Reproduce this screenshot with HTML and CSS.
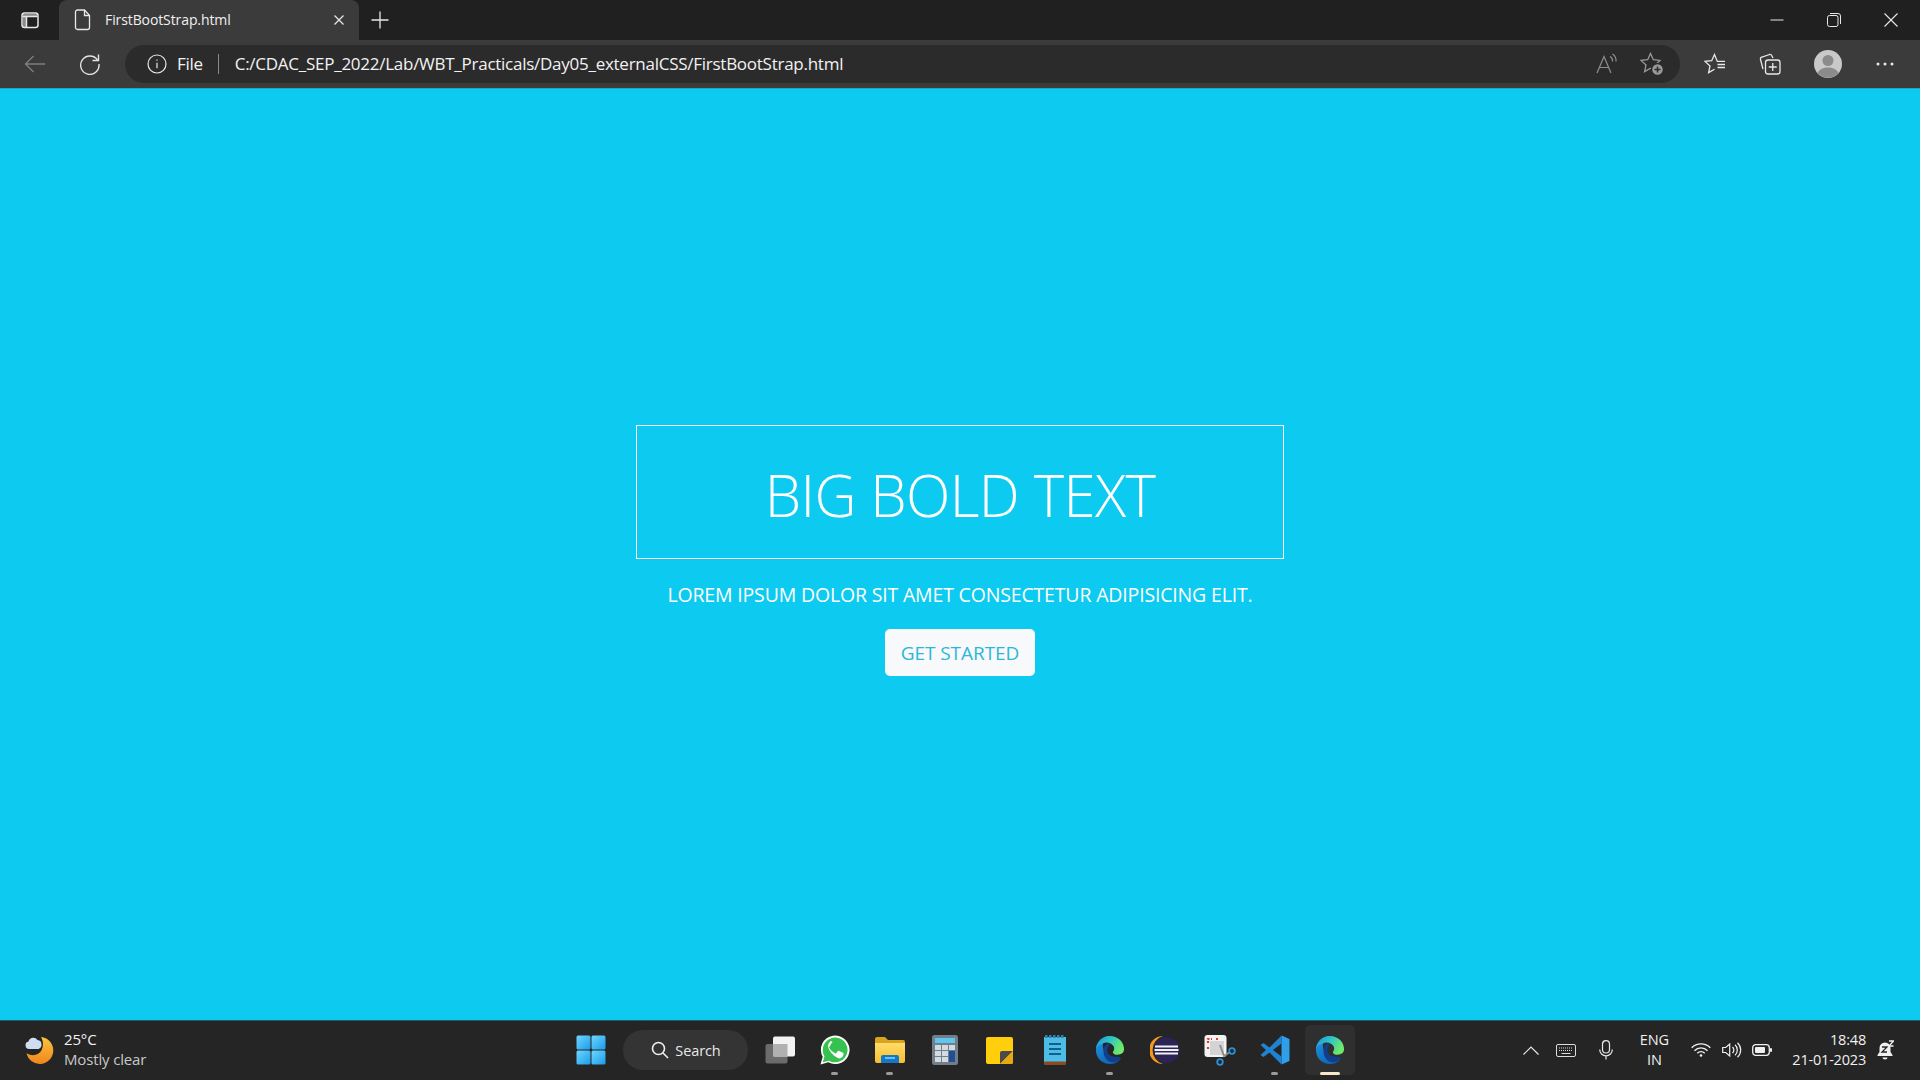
FILE: index.html
```html
<!DOCTYPE html>
<html lang="en">

<head>
    <meta charset="UTF-8">
    <meta name="viewport" content="width=device-width, initial-scale=1.0">
    <title>FirstBootStrap.html</title>
    <link rel="stylesheet" href="styles.css">
</head>

<body>
    <svg class="defs" width="0" height="0">
        <defs>
            <linearGradient id="edgeTop" x1="0" y1="0" x2="1" y2="0.4">
                <stop offset="0" stop-color="#1f8fe0" />
                <stop offset="0.5" stop-color="#2cc4c8" />
                <stop offset="1" stop-color="#6ee96a" />
            </linearGradient>
            <linearGradient id="edgeLow" x1="0" y1="0" x2="0.6" y2="1">
                <stop offset="0" stop-color="#1f9be6" />
                <stop offset="1" stop-color="#0f63b4" />
            </linearGradient>
            <linearGradient id="moon" x1="0" y1="0" x2="0" y2="1">
                <stop offset="0" stop-color="#fbc53a" />
                <stop offset="1" stop-color="#f0851e" />
            </linearGradient>
            <linearGradient id="winBlue" x1="0" y1="0" x2="1" y2="1">
                <stop offset="0" stop-color="#6fd6fb" />
                <stop offset="1" stop-color="#1a9cec" />
            </linearGradient>
            <linearGradient id="folder" x1="0" y1="0" x2="0" y2="1">
                <stop offset="0" stop-color="#ffdc6a" />
                <stop offset="1" stop-color="#f6bd2e" />
            </linearGradient>
            <symbol id="edge" viewBox="0 0 32 32">
                <path fill="url(#edgeLow)" d="M1 16C1 7 8 1 16 1c-6 3-9 8-7 14 1 7 8 12 18 11-3 3-7 5-11 5C8 31 1 25 1 16z" />
                <path fill="#123f8c" d="M9 17c0-5 4-9 9-8-3 1-5 4-5 7 0 5 5 8 12 7l3 2c-3 3-6 4-9 4C13 29 9 23 9 17z" />
                <path fill="url(#edgeTop)" d="M1 15C2 7 8 1 16 1c9 0 15 7 15 14 0 4-3 6-7 6-3 0-5-1-5-3 2-2 2-5 0-7-2-3-7-4-11-2-3 1-6 3-7 6z" />
            </symbol>
        </defs>
    </svg>

    <header class="tabstrip">
        <div class="strip-left">
            <svg class="ic" width="20" height="20" viewBox="0 0 20 20" fill="none" stroke="#e6e6e6" stroke-width="1.5">
                <path d="M3 4h14v2.500H3zM3 7h3v10H3z" fill="#8a8a8a" stroke="none" />
                <rect x="2" y="3" width="16" height="14.5" rx="2.5" />
                <path d="M2.500 6.500h15M6.500 6.500v11" />
            </svg>
        </div>
        <div class="tab">
            <svg class="ic" width="18" height="22" viewBox="0 0 18 22" fill="none" stroke="#e8e8e8" stroke-width="1.3">
                <path d="M3.500 1h7l5 5.500V18.500a2 2 0 0 1-2 2h-10a2 2 0 0 1-2-2V3a2 2 0 0 1 2-2z" />
                <path d="M10.500 1v5.500h5" />
            </svg>
            <span class="tab-title">FirstBootStrap.html</span>
            <svg class="ic tab-x" width="12" height="12" viewBox="0 0 12 12" stroke="#e6e6e6" stroke-width="1.300">
                <path d="M1.500 1.500l9 9M10.500 1.500l-9 9" />
            </svg>
        </div>
        <svg class="ic new-tab" width="18" height="18" viewBox="0 0 18 18" stroke="#e8e8e8" stroke-width="1.300">
            <path d="M9 0.500v17M0.500 9h17" />
        </svg>
        <div class="win-btns">
            <svg class="ic" width="14" height="14" viewBox="0 0 14 14" stroke="#e8e8e8" stroke-width="1">
                <path d="M0.500 7h13" />
            </svg>
            <svg class="ic" width="14" height="14" viewBox="0 0 14 14" fill="none" stroke="#e8e8e8" stroke-width="1">
                <rect x="0.500" y="2.500" width="10.500" height="11" rx="2" />
                <path d="M3 0.500h8a2.500 2.500 0 0 1 2.500 2.500v8" />
            </svg>
            <svg class="ic" width="14" height="14" viewBox="0 0 14 14" stroke="#e8e8e8" stroke-width="1.100">
                <path d="M0.500 0.500l13 13M13.500 0.500l-13 13" />
            </svg>
        </div>
    </header>

    <nav class="toolbar">
        <svg class="ic nav-ic" width="22" height="18" viewBox="0 0 22 18" fill="none" stroke="#7d7d7d" stroke-width="1.400">
            <path d="M21 9H1.500M9.500 1L1.500 9l8 8" />
        </svg>
        <svg class="ic nav-ic" width="22" height="22" viewBox="0 0 22 22" fill="none" stroke="#e4e4e4" stroke-width="1.400">
            <path d="M18.500 7A9.200 9.200 0 1 0 20 11" />
            <path d="M19.500 1.500V7.500H13.500" />
        </svg>
        <div class="address">
            <svg class="ic" width="20" height="20" viewBox="0 0 20 20" fill="none" stroke="#e8e8e8" stroke-width="1.200">
                <circle cx="10" cy="10" r="9" />
                <path d="M10 8.800v5.500M10 5.400v1.400" />
            </svg>
            <span class="file-label">File</span>
            <span class="addr-sep"></span>
            <span class="url">C:/CDAC_SEP_2022/Lab/WBT_Practicals/Day05_externalCSS/FirstBootStrap.html</span>
            <div class="addr-right">
                <svg class="ic" width="22" height="22" viewBox="0 0 22 22" fill="none" stroke="#8f8f8f" stroke-width="1.200">
                    <path d="M1 20L8 3.500l7 16.500M3.500 14.500h9" />
                    <path d="M14 3.500a5 5 0 0 1 2.500 5M16.500 1a8 8 0 0 1 3.500 7.500" />
                </svg>
                <svg class="ic" width="24" height="24" viewBox="0 0 24 24" fill="none" stroke="#9a9a9a" stroke-width="1.300">
                    <path d="M10.500 1.500l2.800 6.200 6.700.7-5 4.500 1.400 6.700-5.900-3.400-5.900 3.400 1.400-6.700-5-4.500 6.700-.7z" />
                    <circle cx="17.500" cy="17.500" r="6" fill="#9a9a9a" stroke="#2b2b2b" stroke-width="1.500" />
                    <path d="M17.500 14.500v6M14.500 17.500h6" stroke="#2b2b2b" stroke-width="1.500" />
                </svg>
            </div>
        </div>
        <div class="tool-right">
            <svg class="ic" width="22" height="22" viewBox="0 0 22 22" fill="none" stroke="#e8e8e8" stroke-width="1.300">
                <path d="M21 8.400h-7.700L10.500 1.500 7.700 7.700 1 8.400l5 4.500-1.400 6.700 5.900-3.400" />
                <path d="M13.500 11.500h7.500M13.500 14.500h7.500" />
            </svg>
            <svg class="ic" width="22" height="22" viewBox="0 0 22 22" fill="none" stroke="#e8e8e8" stroke-width="1.300">
                <path d="M4 16L1.500 6.500a2 2 0 0 1 1.500-2.500l7.500-2.500a2 2 0 0 1 2.500 1.500L14 5" />
                <rect x="6.500" y="7" width="14.500" height="14" rx="2.500" />
                <path d="M13.750 10v8M9.750 14h8" />
            </svg>
            <svg class="ic avatar" width="28" height="28" viewBox="0 0 28 28">
                <circle cx="14" cy="14" r="14" fill="#c9c9c9" />
                <circle cx="14" cy="10.500" r="5.500" fill="#8b8b8b" />
                <path d="M3.500 23c2-4 6-5.500 10.500-5.500s8.500 1.500 10.500 5.500A14 14 0 0 1 3.500 23z" fill="#8b8b8b" />
            </svg>
            <svg class="ic" width="18" height="4" viewBox="0 0 18 4" fill="#e8e8e8">
                <circle cx="2" cy="2" r="1.500" />
                <circle cx="9" cy="2" r="1.500" />
                <circle cx="16" cy="2" r="1.500" />
            </svg>
        </div>
    </nav>

    <main class="page">
        <div class="hero">
            <h1 class="hero-title">BIG BOLD TEXT</h1>
            <p class="hero-text">LOREM IPSUM DOLOR SIT AMET CONSECTETUR ADIPISICING ELIT.</p>
            <a class="hero-btn">GET STARTED</a>
        </div>
    </main>

    <footer class="taskbar">
        <div class="weather">
            <svg class="ic" width="30" height="30" viewBox="0 0 30 30">
                <path fill="url(#moon)" d="M17 2A13.500 13.500 0 1 1 2.500 18c3 2.500 8 3 12 .5 4.500-3 6-10.500 2.500-16.500z" />
                <path fill="#cfdcf2" d="M5 14a3.800 3.800 0 0 1-.5-7.500A5 5 0 0 1 13.500 5a4.500 4.500 0 0 1 4 4.500A4.500 4.500 0 0 1 14.500 14z" />
            </svg>
            <div class="weather-txt">
                <span class="temp">25°C</span>
                <span class="cond">Mostly clear</span>
            </div>
        </div>

        <div class="apps">
            <div class="app">
                <svg width="30" height="30" viewBox="0 0 30 30" fill="url(#winBlue)">
                    <rect x="0.500" y="0.500" width="14" height="14" rx="1.500" />
                    <rect x="15.500" y="0.500" width="14" height="14" rx="1.500" />
                    <rect x="0.500" y="15.500" width="14" height="14" rx="1.500" />
                    <rect x="15.500" y="15.500" width="14" height="14" rx="1.500" />
                </svg>
            </div>
            <div class="search">
                <svg width="18" height="18" viewBox="0 0 18 18" fill="none" stroke="#f0f0f0" stroke-width="1.600">
                    <circle cx="7.500" cy="7.500" r="6" />
                    <path d="M12 12l5 5" />
                </svg>
                <span>Search</span>
            </div>
            <div class="app">
                <svg width="30" height="28" viewBox="0 0 30 28">
                    <rect x="0.500" y="8" width="22" height="19.500" rx="2" fill="#6b6b6b" />
                    <rect x="8" y="0.500" width="22" height="20" rx="2" fill="#f2f2f2" />
                    <rect x="8" y="8" width="14.500" height="12.500" fill="#b0b0b0" />
                </svg>
            </div>
            <div class="app open">
                <svg width="30" height="30" viewBox="0 0 30 30">
                    <path fill="#fff" d="M0.500 29.500l2.200-7.800A14.300 14.300 0 1 1 8.300 27.300z" />
                    <path fill="#35c24f" d="M2.800 27.300l1.700-6A12.400 12.400 0 1 1 9 25.700z" />
                    <path fill="#fff" d="M10.800 8.200c-.4 0-1 .1-1.500.7-.5.600-1.700 1.800-1.700 4.200 0 2.500 1.800 4.900 2.100 5.200.2.300 3.500 5.500 8.700 7.100 1.200 0 3.600-.9 4.200-2.600.5-1.300.5-2.400.3-2.600-.1-.3-.5-.4-1-.6l-3.400-1.700c-.5-.2-.8-.3-1.100.2l-1.600 2c-.3.300-.6.400-1.100.1-3-1.500-4.500-3-6-5.500-.3-.5 0-.8.200-1l1.100-1.400c.2-.3.200-.6.100-.9L12 9c-.4-.8-.7-.8-1.200-.8z" transform="translate(0.500 -2)" />
                </svg>
            </div>
            <div class="app open">
                <svg width="32" height="28" viewBox="0 0 32 28">
                    <path fill="#d9a520" d="M1 3a2 2 0 0 1 2-2h8l3 3h15a2 2 0 0 1 2 2v4H1z" />
                    <path fill="url(#folder)" d="M1 7h30v18a2 2 0 0 1-2 2H3a2 2 0 0 1-2-2z" />
                    <path fill="#1478c8" d="M7 27v-6a2 2 0 0 1 2-2h14a2 2 0 0 1 2 2v6z" />
                    <rect x="11" y="21" width="10" height="2" fill="#6cc0f0" />
                </svg>
            </div>
            <div class="app">
                <svg width="26" height="30" viewBox="0 0 26 30">
                    <rect x="0" y="0" width="26" height="30" rx="2.500" fill="#727e8a" />
                    <rect x="3" y="3" width="20" height="5" fill="#5fc7ee" />
                    <g fill="#d4dbe0">
                        <rect x="3" y="10" width="6" height="5" />
                        <rect x="10" y="10" width="6" height="5" />
                        <rect x="17" y="10" width="6" height="5" />
                        <rect x="3" y="16" width="6" height="5" />
                        <rect x="10" y="16" width="6" height="5" />
                        <rect x="3" y="22" width="6" height="5" />
                        <rect x="10" y="22" width="6" height="5" />
                    </g>
                    <rect x="17" y="16" width="6" height="11" fill="#1f4f95" />
                </svg>
            </div>
            <div class="app">
                <svg width="27" height="27" viewBox="0 0 27 27">
                    <rect width="27" height="27" rx="2" fill="#ffcf0d" />
                    <path d="M14 27V16a2 2 0 0 1 2-2h11L14 27z" fill="#4a4a4a" />
                    <path d="M14 27h11a2 2 0 0 0 2-2V14z" fill="#e8a910" />
                </svg>
            </div>
            <div class="app">
                <svg width="22" height="30" viewBox="0 0 22 30">
                    <rect x="0" y="2" width="22" height="26" fill="#4dbde6" />
                    <rect x="0" y="26.500" width="22" height="3.500" rx="1" fill="#8c4a22" />
                    <path d="M1 1.500h20" stroke="#2f7fb0" stroke-width="3" stroke-dasharray="2.500 1.500" />
                    <path d="M5 9h12M5 14h12M5 19h12" stroke="#0f5f8a" stroke-width="1.800" />
                </svg>
            </div>
            <div class="app open">
                <svg width="30" height="30"><use href="#edge" /></svg>
            </div>
            <div class="app">
                <svg width="30" height="30" viewBox="0 0 30 30">
                    <path d="M13 1A14 14 0 0 0 13 29 14.600 14.600 0 0 1 13 1z" fill="#f39a1e" />
                    <circle cx="16.500" cy="15" r="13" fill="#2c2356" />
                    <path d="M5 11.500h23M4.500 15h24M5 18.500h23" stroke="#f1f1f8" stroke-width="2" />
                </svg>
            </div>
            <div class="app">
                <svg width="32" height="32" viewBox="0 0 32 32">
                    <rect x="0.500" y="1" width="22" height="22" rx="3" fill="#f3f3f3" />
                    <path d="M4 9V5h4M12 5h2M4 13v2" fill="none" stroke="#d6402e" stroke-width="2.200" stroke-dasharray="2 1.500" />
                    <rect x="6" y="7" width="14" height="14" fill="#d4d4d4" />
                    <path d="M16 11l4 11 6 -4" fill="none" stroke="#8e8e8e" stroke-width="2" />
                    <circle cx="28" cy="17" r="2.800" fill="none" stroke="#2c8fd8" stroke-width="1.800" />
                    <circle cx="16" cy="28" r="2.800" fill="none" stroke="#2c8fd8" stroke-width="1.800" />
                </svg>
            </div>
            <div class="app open">
                <svg width="30" height="30" viewBox="0 0 30 30">
                    <path fill="#2f9fe8" d="M21.500 0.500L29.500 4v22l-8 3.500z" />
                    <path fill="#1f83d2" d="M21.500 0.500L9.500 12.500 3.500 8 0.500 10l5.500 5-5.500 5 3 2 6-4.500 12 12V21.500L13 15l8.500-6.500z" />
                </svg>
            </div>
            <div class="app active">
                <svg width="30" height="30"><use href="#edge" /></svg>
            </div>
        </div>

        <div class="tray">
            <svg width="16" height="9" viewBox="0 0 16 9" fill="none" stroke="#e8e8e8" stroke-width="1.200">
                <path d="M0.500 8.500L8 1l7.500 7.500" />
            </svg>
            <svg class="kbd" width="20" height="13" viewBox="0 0 20 13" fill="none" stroke="#dcdcdc" stroke-width="1">
                <rect x="0.500" y="0.500" width="19" height="12" rx="1.500" />
                <path d="M3 4h14M3 6.500h14" stroke-dasharray="1 1" />
                <path d="M5.500 9.500h9" />
            </svg>
            <svg class="mic" width="14" height="20" viewBox="0 0 14 20" fill="none" stroke="#e8e8e8" stroke-width="1.200">
                <rect x="3.500" y="0.700" width="7" height="12.300" rx="3.500" />
                <path d="M0.700 9.500a6.300 6.300 0 0 0 12.600 0M7 16v3.500" />
            </svg>
            <div class="lang"><span>ENG</span><span>IN</span></div>
            <svg class="wifi" width="20" height="14" viewBox="0 0 20 14" fill="none" stroke="#f0f0f0" stroke-width="1.400">
                <path d="M0.700 4.800a13 13 0 0 1 18.600 0M3.500 7.700a9 9 0 0 1 13 0M6.300 10.300a5 5 0 0 1 7.400 0" />
                <circle cx="10" cy="12.500" r="1.300" fill="#f0f0f0" stroke="none" />
            </svg>
            <svg class="vol" width="20" height="16" viewBox="0 0 20 16" fill="none" stroke="#f0f0f0" stroke-width="1.200">
                <path d="M0.700 5.500v5h3l4 3.500V2l-4 3.500z" />
                <path d="M10.500 5a4 4 0 0 1 0 6M13 2.800a7 7 0 0 1 0 10.400M15.500 0.700a10 10 0 0 1 0 14.600" />
            </svg>
            <svg class="batt" width="20" height="12" viewBox="0 0 20 12">
                <rect x="0.700" y="0.700" width="16.600" height="10.600" rx="3" fill="none" stroke="#f0f0f0" stroke-width="1.300" />
                <rect x="3" y="3" width="10" height="6" rx="1" fill="#f0f0f0" />
                <rect x="18" y="4" width="2" height="4" rx="1" fill="#f0f0f0" />
            </svg>
            <div class="clock"><span>18:48</span><span>21-01-2023</span></div>
            <svg class="bell" width="17" height="20" viewBox="0 0 17 20">
                <path fill="#f0f0f0" d="M8 2.500A5.500 5.500 0 0 0 2.500 8v4L0.500 15v1h15v-1l-2-3V8A5.500 5.500 0 0 0 8 2.500z" />
                <path fill="#f0f0f0" d="M5.500 17.500h5a2.500 2 0 0 1-5 0z" />
                <path fill="none" stroke="#252525" stroke-width="1.300" d="M5 7h5l-5 5h5" />
                <path fill="none" stroke="#f0f0f0" stroke-width="1.300" d="M12 1h4.500L12 6h4.500" />
            </svg>
        </div>
    </footer>
</body>

</html>
```

FILE: styles.css
```css
* {
    box-sizing: border-box;
}

html,
body {
    margin: 0;
    height: 100%;
}

body {
    width: 1920px;
    height: 1080px;
    overflow: hidden;
    display: flex;
    flex-direction: column;
    font-family: "Open Sans", "Noto Sans", sans-serif;
    background-color: #0dcaf0;
}

.defs {
    position: absolute;
}

.ic {
    display: block;
    flex: none;
}

/* tab row */
.tabstrip {
    height: 40px;
    background-color: #202020;
    display: flex;
    align-items: flex-end;
    flex: none;
}

.strip-left {
    width: 59px;
    height: 40px;
    display: flex;
    align-items: center;
    padding-left: 20px;
}

.tab {
    width: 300px;
    height: 40px;
    background-color: #3b3b3b;
    border-radius: 8px 8px 0 0;
    display: flex;
    align-items: center;
    padding: 0 14px 0 15px;
    color: #f0f0f0;
}

.tab-title {
    font-size: 14px;
    letter-spacing: -0.1px;
    margin: 0 0 2px 13px;
    flex: 1;
}

.new-tab {
    margin: 0 0 11px 12px;
}

.win-btns {
    margin-left: auto;
    height: 40px;
    display: flex;
    align-items: center;
    gap: 43px;
    padding-right: 22px;
}

/* address row */
.toolbar {
    height: 48px;
    background-color: #3b3b3b;
    display: flex;
    align-items: center;
    flex: none;
    padding-left: 24px;
}

.nav-ic {
    margin-right: 33px;
}

.address {
    width: 1555px;
    height: 38px;
    margin-left: -9px;
    background-color: #2b2b2b;
    border-radius: 19px;
    display: flex;
    align-items: center;
    padding-left: 22px;
    color: #f2f2f2;
}

.file-label {
    font-size: 17px;
    letter-spacing: -0.3px;
    margin: 0 0 2px 10px;
}

.addr-sep {
    width: 1px;
    height: 20px;
    background-color: #8a8a8a;
    margin: 0 16px 0 15px;
}

.url {
    font-size: 17px;
    letter-spacing: -0.26px;
    margin-bottom: 2px;
}

.addr-right {
    margin-left: auto;
    display: flex;
    align-items: center;
    gap: 22px;
    padding-right: 16px;
}

.tool-right {
    display: flex;
    align-items: center;
    gap: 33px;
    margin-left: 24px;
}

.avatar {
    margin-right: 1px;
}

/* page */
.page {
    flex: 1;
    border-top: 1px solid #1aa9c9;
    display: flex;
    justify-content: center;
    padding-top: 336px;
}

.hero {
    width: 648px;
    display: flex;
    flex-direction: column;
    align-items: center;
    color: #fff;
}

.hero-title {
    width: 100%;
    height: 134px;
    margin: 0;
    border: 1px solid #fff;
    text-align: center;
    font-size: 58px;
    font-weight: 300;
    line-height: 138px;
    letter-spacing: -0.6px;
}

.hero-text {
    margin: 23px 0 0;
    font-size: 19.5px;
    line-height: 26px;
    letter-spacing: -0.17px;
    white-space: nowrap;
}

.hero-btn {
    width: 150px;
    height: 47px;
    margin-top: 21px;
    background-color: #f8f9fa;
    border-radius: 5px;
    color: #2bb7dc;
    font-size: 19px;
    letter-spacing: -0.05px;
    display: flex;
    align-items: center;
    justify-content: center;
}

/* taskbar */
.taskbar {
    height: 60px;
    flex: none;
    background-color: #252525;
    border-top: 1px solid #1b5d6c;
    padding-bottom: 1px;
    display: grid;
    grid-template-columns: 1fr auto 1fr;
    align-items: center;
}

.weather {
    display: flex;
    align-items: center;
    gap: 10px;
    padding-left: 24px;
}

.weather-txt {
    display: flex;
    flex-direction: column;
    font-size: 15px;
    line-height: 20px;
    letter-spacing: -0.15px;
    margin-top: -3px;
}

.temp {
    color: #f2f2f2;
}

.cond {
    color: #c8c8c8;
}

.apps {
    display: flex;
    align-items: center;
    gap: 5px;
}

.app {
    width: 50px;
    height: 50px;
    display: flex;
    align-items: center;
    justify-content: center;
    border-radius: 5px;
    position: relative;
}

.app.active {
    background-color: #2f2f2f;
}

.app.open::after,
.app.active::after {
    content: "";
    position: absolute;
    left: 50%;
    bottom: 0;
    width: 7px;
    height: 3px;
    margin-left: -3.5px;
    border-radius: 2px;
    background-color: #9a9a9a;
}

.app.active::after {
    width: 20px;
    margin-left: -10px;
    background-color: #f5e7c9;
}

.search {
    width: 125px;
    height: 40px;
    margin: 0 2px;
    padding-left: 2px;
    border-radius: 20px;
    background-color: #343434;
    color: #e8e8e8;
    font-size: 14.5px;
    letter-spacing: -0.1px;
    display: flex;
    align-items: center;
    justify-content: center;
    gap: 6px;
}

.tray {
    display: flex;
    align-items: center;
    justify-content: flex-end;
    color: #f0f0f0;
    font-size: 14.5px;
    line-height: 20px;
    letter-spacing: -0.2px;
    padding-right: 26px;
}

.kbd {
    margin-left: 17px;
}

.mic {
    margin-left: 23px;
}

.lang {
    width: 40px;
    margin-left: 21px;
    display: flex;
    flex-direction: column;
    align-items: center;
}

.wifi {
    margin-left: 17px;
}

.vol {
    margin-left: 11px;
}

.batt {
    margin-left: 10px;
}

.clock {
    margin-left: 20px;
    display: flex;
    flex-direction: column;
    align-items: flex-end;
}

.bell {
    margin-left: 11px;
}
```
